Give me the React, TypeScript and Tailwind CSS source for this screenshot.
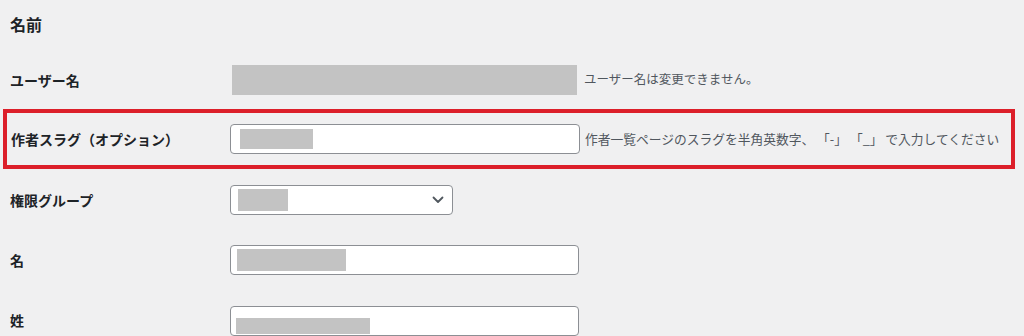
import React from "react";

const font = { fontFamily: '"Noto Sans CJK JP", "Noto Sans", sans-serif' };

function Label({ children, w = "w-[220px]" }: { children: React.ReactNode; w?: string }) {
  return (
    <div className={`${w} shrink-0 text-[14px] font-semibold text-[#1d2327] leading-5`}>{children}</div>
  );
}

function TextBox({ width, redact, redactW }: { width: string; redact?: boolean; redactW: string }) {
  return (
    <div className={`${width} h-[30px] shrink-0 rounded-[4px] border border-[#8c8f94] bg-white flex items-center px-[6px]`}>
      {redact ? <div className={`${redactW} h-[22px] bg-[#c3c3c3]`} /> : null}
    </div>
  );
}

export default function App() {
  return (
    <div className="w-[1024px] h-[336px] overflow-hidden bg-[#f0f0f1] text-[#1d2327]" style={font}>
      <div className="pl-[10px] pt-[12px] h-[50px]">
        <h2 className="text-[16px] font-semibold leading-6">名前</h2>
      </div>

      {/* ユーザー名 */}
      <div className="h-[59px] flex items-center pl-[10px]">
        <Label>ユーザー名</Label>
        <div className="ml-[2px] w-[345px] h-[30px] bg-[#c3c3c3] shrink-0" />
        <span className="ml-[7px] text-[12.5px] text-[#50575e]">ユーザー名は変更できません。</span>
      </div>

      {/* 作者スラグ */}
      <div className="ml-[3px] w-[1012px] h-[60px] border-4 border-[#dc1f2a] flex items-center pl-[4px]">
        <Label w="w-[219px]">作者スラグ（オプション）</Label>
        <div className="w-[350px] h-[30px] shrink-0 rounded-[4px] border border-[#8c8f94] bg-white flex items-center pl-[9px]">
          <div className="w-[73px] h-[20px] bg-[#c3c3c3]" />
        </div>
        <span className="ml-[5px] text-[12.75px] text-[#50575e] whitespace-nowrap">
          作者一覧ページのスラグを半角英数字、 「-」 「_」 で入力してください
        </span>
      </div>

      {/* 権限グループ */}
      <div className="h-[61px] flex items-center pl-[10px]">
        <Label>権限グループ</Label>
        <div className="w-[223px] h-[30px] shrink-0 rounded-[4px] border border-[#8c8f94] bg-white flex items-center justify-between pl-[7px] pr-[8px]">
          <div className="w-[50px] h-[22px] bg-[#c3c3c3]" />
          <svg width="12" height="8" viewBox="0 0 12 8" fill="none">
            <path d="M1.5 1.5L6 6L10.5 1.5" stroke="#50575e" strokeWidth="1.8" strokeLinecap="round" strokeLinejoin="round" />
          </svg>
        </div>
      </div>

      {/* 名 */}
      <div className="h-[60px] flex items-center pl-[10px]">
        <Label>名</Label>
        <TextBox width="w-[349px]" redact redactW="w-[109px]" />
      </div>

      {/* 姓 */}
      <div className="h-[60px] flex items-center pl-[10px]">
        <Label>姓</Label>
        <div className="w-[349px] h-[30px] shrink-0 rounded-[4px] border border-[#8c8f94] bg-white flex items-end px-[5px] pb-[1px] self-start mt-[16px]">
          <div className="w-[134px] h-[16px] bg-[#c3c3c3]" />
        </div>
      </div>
    </div>
  );
}
